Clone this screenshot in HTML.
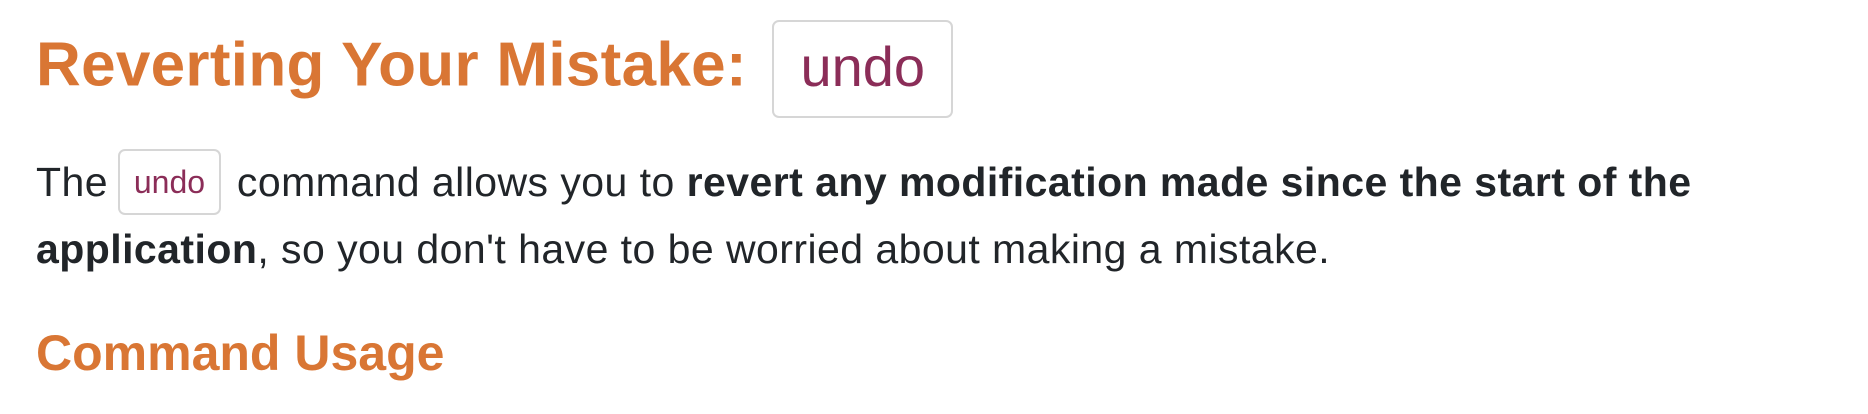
<!DOCTYPE html>
<html><head><meta charset="utf-8"><style>
body{margin:0;background:#fff;width:1868px;height:414px;overflow:hidden;font-family:"Liberation Sans",sans-serif;color:#212529}
.h1{position:absolute;left:36px;top:20px;font-size:62px;font-weight:bold;color:#d97634;white-space:nowrap;letter-spacing:0.3px}
.h1 code{display:inline-block;font-family:"Liberation Sans",sans-serif;font-weight:normal;color:#8b2d58;border:2px solid #d6d6d6;border-radius:7px;padding:16px 26px 20px;font-size:56px;vertical-align:middle;margin-left:8px;line-height:58px;letter-spacing:0}
.p{position:absolute;left:36px;top:151px;width:1780px;font-size:41px;line-height:63px;letter-spacing:0.45px}
.p code{display:inline-block;font-family:"Liberation Sans",sans-serif;color:#8b2d58;border:2px solid #d6d6d6;border-radius:7px;padding:8px 14px;font-size:32px;line-height:46px;vertical-align:middle;position:relative;top:-3px;margin:0 4px 0 -2px;letter-spacing:0}
.h2{position:absolute;left:36px;top:324px;font-size:50px;font-weight:bold;color:#d97634;white-space:nowrap}
</style></head><body>
<div class="h1">Reverting Your Mistake: <code>undo</code></div>
<div class="p">The <code>undo</code> command allows you to <b>revert any modification made since the start of the application</b>, so you don't have to be worried about making a mistake.</div>
<div class="h2">Command Usage</div>
</body></html>
